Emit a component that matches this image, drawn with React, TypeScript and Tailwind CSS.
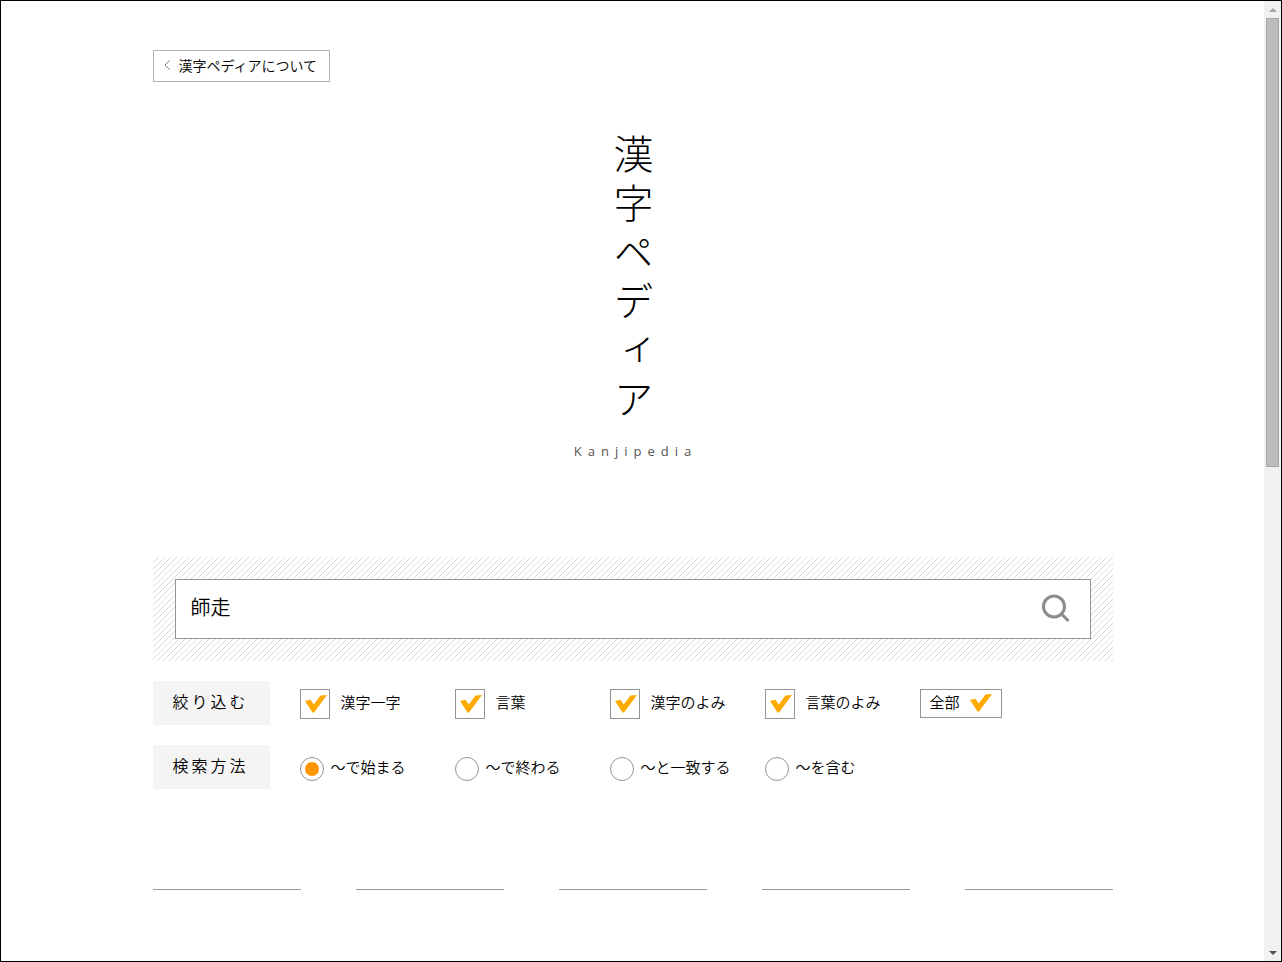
import React, { useState } from "react";

const filters = [
  { id: "kanji", label: "漢字一字" },
  { id: "word", label: "言葉" },
  { id: "kanji-yomi", label: "漢字のよみ" },
  { id: "word-yomi", label: "言葉のよみ" },
];

const methods = [
  { id: "prefix", label: "～で始まる" },
  { id: "suffix", label: "～で終わる" },
  { id: "exact", label: "～と一致する" },
  { id: "contain", label: "～を含む" },
];

function CheckMark({ className }: { className?: string }) {
  return (
    <svg viewBox="0 0 22 18" className={className} aria-hidden="true">
      <path d="M0 6L5.500 4.800L8.700 9.500L15.500 0.500L22 0L9 17.500H7.500Z" fill="#ffaa00" />
    </svg>
  );
}

function RowLabel({ children }: { children: React.ReactNode }) {
  return (
    <legend className="float-left mr-[30px] h-11 w-[117px] bg-[#f4f4f4] pl-5 text-base leading-10 tracking-[3px]">
      {children}
    </legend>
  );
}

function Scrollbar() {
  return (
    <div className="flex w-[17px] shrink-0 flex-col items-center bg-[#f1f1f1]" aria-hidden="true">
      <div className="flex h-[17px] items-center">
        <svg viewBox="0 0 8 4" className="h-1 w-2">
          <path d="M4 0L8 4H0Z" fill="#a3a3a3" />
        </svg>
      </div>
      <div className="w-[13px] grow">
        <div className="h-[449px] border border-[#a8a8a8] bg-[#bcbcbc]" />
      </div>
      <div className="flex h-[17px] items-center">
        <svg viewBox="0 0 8 4" className="h-1 w-2">
          <path d="M0 0H8L4 4Z" fill="#505050" />
        </svg>
      </div>
    </div>
  );
}

export default function App() {
  const [word, setWord] = useState("師走");
  const [checked, setChecked] = useState<string[]>(filters.map((f) => f.id));
  const [method, setMethod] = useState("prefix");

  const toggle = (id: string) =>
    setChecked((list) => (list.includes(id) ? list.filter((x) => x !== id) : [...list, id]));

  return (
    <div className="flex min-h-screen border border-black bg-white font-['Noto_Sans_CJK_JP',sans-serif] font-[350] text-black">
      <main className="min-w-0 grow">
        <div className="mx-auto max-w-[960px] pt-[49px]">
          <a
            href="#about"
            className="inline-flex h-8 items-center border border-[#b3b3b3] pr-3 pb-[2px] pl-[10px] text-sm"
          >
            <svg viewBox="0 0 6 10" className="mr-[9px] h-[10px] w-[6px]" aria-hidden="true">
              <path d="M5.500 0.500L1 5L5.500 9.500" fill="none" stroke="#777" />
            </svg>
            漢字ペディアについて
          </a>

          {/* Logo */}
          <header className="mt-[52px] flex h-[423px] flex-col items-center">
            <h1 className="h-[302px] pl-[2px] text-[40px] leading-10 font-light tracking-[9px] [writing-mode:vertical-rl]">
              漢字ペディア
            </h1>
            <p className="mt-[3px] pl-[6px] font-['Open_Sans',sans-serif] text-[13px] font-normal leading-6 tracking-[6px] text-[#555]">
              Kanjipedia
            </p>
          </header>

          <form onSubmit={(e) => e.preventDefault()}>
            {/* Search box */}
            <div className="bg-[linear-gradient(135deg,transparent_45%,#d8d8d8_45%,#d8d8d8_55%,transparent_55%)] bg-size-[6px_6px] p-[22px]">
              <div className="flex h-[60px] items-center border border-[#949494] bg-white">
                <input
                  type="text"
                  aria-label="検索"
                  value={word}
                  onChange={(e) => setWord(e.target.value)}
                  className="h-full min-w-0 grow pb-[6px] pl-[15px] text-xl outline-none"
                />
                <button type="submit" aria-label="検索する" className="mr-5 pb-[2px]">
                  <svg viewBox="0 0 28 28" className="h-7 w-7" fill="none" stroke="#8b8b8b">
                    <circle cx="12" cy="12.500" r="10.500" strokeWidth="3" />
                    <path d="M19.500 20L26.500 27" strokeWidth="3" />
                  </svg>
                </button>
              </div>
            </div>

            {/* Filters */}
            <fieldset className="mt-5 flex h-11">
              <RowLabel>絞り込む</RowLabel>
              <div className="flex pt-2">
                {filters.map((f) => (
                  <label key={f.id} className="relative flex h-[30px] w-[155px]">
                    <input
                      type="checkbox"
                      checked={checked.includes(f.id)}
                      onChange={() => toggle(f.id)}
                      className="peer mr-[11px] h-[30px] w-[30px] appearance-none border border-[#949494]"
                    />
                    <CheckMark className="absolute top-[6px] left-[5px] hidden h-[18px] w-[22px] peer-checked:block" />
                    <span className="text-[15px] leading-[26px]">{f.label}</span>
                  </label>
                ))}
                <button
                  type="button"
                  onClick={() => setChecked(filters.map((f) => f.id))}
                  className="flex h-[29px] w-[82px] border border-[#949494] pt-1 pl-[9px] text-[15px]"
                >
                  <span className="leading-4">全部</span>
                  <CheckMark className="ml-[10px] h-[18px] w-[22px]" />
                </button>
              </div>
            </fieldset>

            {/* Matching method */}
            <fieldset className="mt-5 flex h-11">
              <RowLabel>検索方法</RowLabel>
              <div className="flex pt-3">
                {methods.map((m) => (
                  <label key={m.id} className="relative flex h-6 w-[155px]">
                    <input
                      type="radio"
                      name="method"
                      checked={method === m.id}
                      onChange={() => setMethod(m.id)}
                      className="peer mr-[7px] h-6 w-6 appearance-none rounded-full border border-[#949494]"
                    />
                    <span className="absolute top-[5px] left-[5px] hidden h-[14px] w-[14px] rounded-full bg-[#ff9500] peer-checked:block" />
                    <span className="text-[15px] leading-5">{m.label}</span>
                  </label>
                ))}
              </div>
            </fieldset>
          </form>

          <div className="mt-[100px] grid grid-cols-5 gap-[55px]">
            <div className="border-t border-[#999]" />
            <div className="border-t border-[#999]" />
            <div className="border-t border-[#999]" />
            <div className="border-t border-[#999]" />
            <div className="border-t border-[#999]" />
          </div>
        </div>
      </main>
      <Scrollbar />
    </div>
  );
}
